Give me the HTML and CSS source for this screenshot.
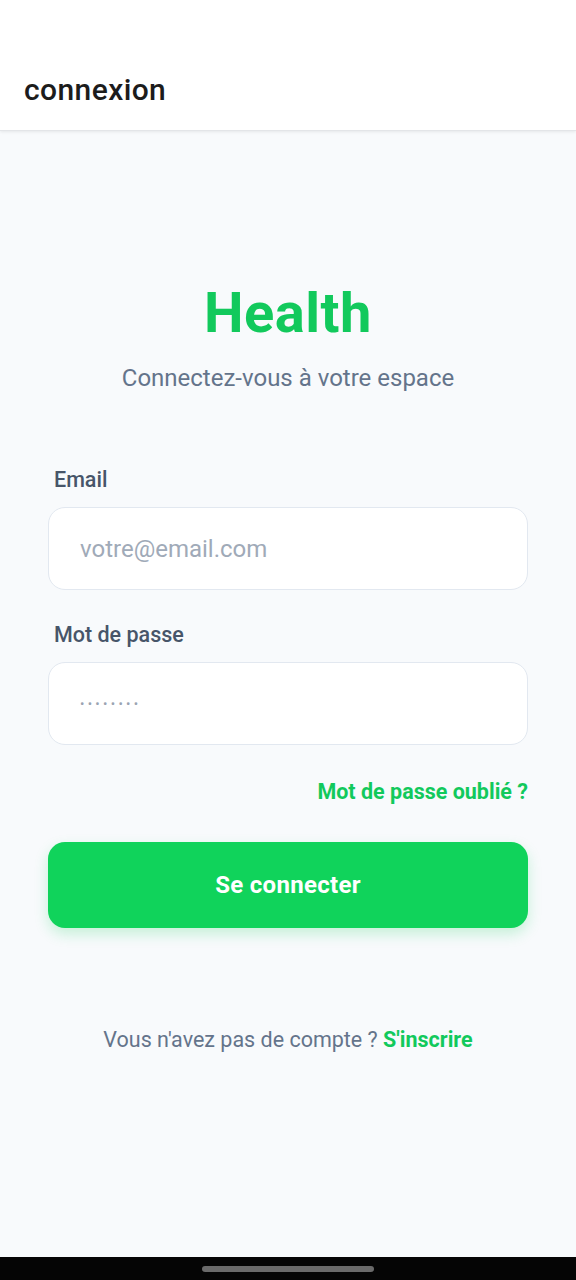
FILE: index.html
```html
<!DOCTYPE html>
<html lang="fr">
<head>
<meta charset="utf-8">
<link rel="stylesheet" href="styles.css">
</head>
<body>
<div class="screen">
  <header class="appbar"><h1 class="appbar-title">connexion</h1></header>
  <main class="content">
    <div class="brand">
      <h2 class="brand-title">Health</h2>
      <p class="brand-sub">Connectez-vous à votre espace</p>
    </div>
    <form class="form">
      <label class="label">Email</label>
      <div class="field"><span class="placeholder">votre@email.com</span></div>
      <label class="label label-2">Mot de passe</label>
      <div class="field"><span class="placeholder dots">••••••••</span></div>
      <div class="forgot-row"><a class="forgot">Mot de passe oublié ?</a></div>
      <button type="button" class="btn">Se connecter</button>
    </form>
    <p class="signup">Vous n'avez pas de compte ? <a class="signup-link">S'inscrire</a></p>
  </main>
  <div class="navbar"><span class="pill"></span></div>
</div>
</body>
</html>
```
FILE: styles.css
```css
* { box-sizing: border-box; }
html, body { margin: 0; padding: 0; }
body { font-family: Roboto, "Noto Sans", sans-serif; background: #f8fafc; }
.screen { width: 576px; height: 1280px; display: flex; flex-direction: column; background: #f8fafc; }
.appbar { height: 131px; background: #fff; border-bottom: 1px solid #e3e5e8; box-shadow: 0 1px 3px rgba(0,0,0,0.08); display: flex; align-items: flex-end; padding: 0 24px 22px; }
.appbar-title { margin: 0; font-size: 30px; line-height: 36px; font-weight: 500; color: #1c1c1c; letter-spacing: 0.4px; }
.content { flex: 1; display: flex; flex-direction: column; padding: 0 48px; }
.brand { display: flex; flex-direction: column; align-items: center; padding-top: 150px; }
.brand-title { margin: 0; font-size: 56px; font-weight: 700; color: #12c95c; line-height: 64px; letter-spacing: 0.5px; }
.brand-sub { margin: 20px 0 0; font-size: 24px; color: #64748b; line-height: 26px; }
.form { display: flex; flex-direction: column; margin-top: 76px; }
.label { font-size: 21.5px; font-weight: 500; color: #475569; margin-left: 6px; line-height: 26px; }
.label-2 { margin-top: 32px; }
.field { margin-top: 14px; height: 83px; background: #fff; border: 1px solid #e2e8f0; border-radius: 17px; display: flex; align-items: center; padding: 0 31px; }
.placeholder { font-size: 24px; color: #a0aab8; }
.dots { font-size: 13px; line-height: 13px; letter-spacing: 3.3px; color: #9aa4b2; }
.forgot-row { display: flex; justify-content: flex-end; margin-top: 34px; }
.forgot { font-size: 21.5px; font-weight: 700; color: #12c95c; line-height: 26px; }
.btn { margin-top: 37px; height: 86px; border: none; border-radius: 17px; background: #10d35b; color: #fff; font-family: Roboto, sans-serif; font-size: 24px; font-weight: 700; box-shadow: 0 6px 14px rgba(16,211,91,0.22); letter-spacing: 0.3px; }
.signup { margin: 99px 0 0; text-align: center; font-size: 21.5px; color: #64748b; line-height: 26px; }
.signup-link { color: #12c95c; font-weight: 700; }
.navbar { height: 23px; background: #050505; display: flex; justify-content: center; align-items: center; }
.pill { width: 172px; height: 6px; border-radius: 3px; background: #6a6a6a; }
```
